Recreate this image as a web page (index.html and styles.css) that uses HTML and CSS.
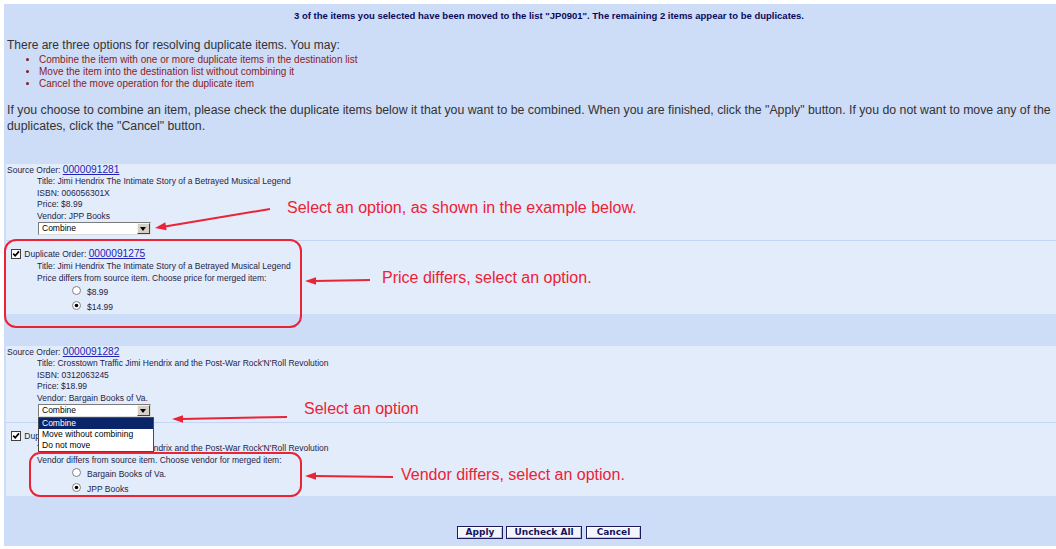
FILE: index.html
```html
<!DOCTYPE html>
<html lang="en">
<head>
    <meta charset="UTF-8">
    <title>Resolve Duplicate Items</title>
    <link rel="stylesheet" href="styles.css">
</head>
<body>

<div class="page">
    <p class="notice">3 of the items you selected have been moved to the list "JP0901". The remaining 2 items appear to be duplicates.</p>

    <div class="intro">
        <p class="lead">There are three options for resolving duplicate items. You may:</p>
        <ul class="choices">
            <li>Combine the item with one or more duplicate items in the destination list</li>
            <li>Move the item into the destination list without combining it</li>
            <li>Cancel the move operation for the duplicate item</li>
        </ul>
        <p class="lead wide">If you choose to combine an item, please check the duplicate items below it that you want to be combined. When you are finished, click the "Apply" button. If you do not want to move any of the duplicates, click the "Cancel" button.</p>
    </div>

    <!-- first duplicate -->
    <div class="group">
        <div class="item source">
            <div class="order">Source Order: <a href="#">0000091281</a></div>
            <div class="details">
                <div>Title: Jimi Hendrix The Intimate Story of a Betrayed Musical Legend</div>
                <div>ISBN: 006056301X</div>
                <div>Price: $8.99</div>
                <div>Vendor: JPP Books</div>
                <div class="select">
                    <span class="select-value">Combine</span>
                    <span class="select-btn"></span>
                </div>
            </div>
        </div>
        <div class="item dup">
            <div class="order">
                <svg class="check" width="10" height="10" viewBox="0 0 10 10"><rect x="0.5" y="0.5" width="9" height="9" fill="#fff" stroke="#404040"/><path d="M2.2 4.6 L4.2 6.8 L8 2.4" fill="none" stroke="#000" stroke-width="1.7"/></svg>
                Duplicate Order: <a href="#">0000091275</a>
            </div>
            <div class="details">
                <div>Title: Jimi Hendrix The Intimate Story of a Betrayed Musical Legend</div>
                <div>Price differs from source item. Choose price for merged item:</div>
                <div class="pick">
                    <svg class="radio" width="9" height="9" viewBox="0 0 9 9"><circle cx="4.5" cy="4.5" r="4" fill="#fff" stroke="#808080"/></svg>
                    <span>$8.99</span>
                </div>
                <div class="pick">
                    <svg class="radio" width="9" height="9" viewBox="0 0 9 9"><circle cx="4.5" cy="4.5" r="4" fill="#fff" stroke="#808080"/><circle cx="4.5" cy="4.5" r="1.8" fill="#000"/></svg>
                    <span>$14.99</span>
                </div>
            </div>
        </div>
    </div>

    <!-- second duplicate -->
    <div class="group second">
        <div class="item source">
            <div class="order">Source Order: <a href="#">0000091282</a></div>
            <div class="details">
                <div>Title: Crosstown Traffic Jimi Hendrix and the Post-War Rock'N'Roll Revolution</div>
                <div>ISBN: 0312063245</div>
                <div>Price: $18.99</div>
                <div>Vendor: Bargain Books of Va.</div>
                <div class="select">
                    <span class="select-value">Combine</span>
                    <span class="select-btn"></span>
                    <div class="select-list">
                        <div class="opt active">Combine</div>
                        <div class="opt">Move without combining</div>
                        <div class="opt">Do not move</div>
                    </div>
                </div>
            </div>
        </div>
        <div class="item dup">
            <div class="order">
                <svg class="check" width="10" height="10" viewBox="0 0 10 10"><rect x="0.5" y="0.5" width="9" height="9" fill="#fff" stroke="#404040"/><path d="M2.2 4.6 L4.2 6.8 L8 2.4" fill="none" stroke="#000" stroke-width="1.7"/></svg>
                Duplicate Order: <a href="#">0000091283</a>
            </div>
            <div class="details">
                <div>Title: Crosstown Traffic Jimi Hendrix and the Post-War Rock'N'Roll Revolution</div>
                <div>Vendor differs from source item. Choose vendor for merged item:</div>
                <div class="pick">
                    <svg class="radio" width="9" height="9" viewBox="0 0 9 9"><circle cx="4.5" cy="4.5" r="4" fill="#fff" stroke="#808080"/></svg>
                    <span>Bargain Books of Va.</span>
                </div>
                <div class="pick">
                    <svg class="radio" width="9" height="9" viewBox="0 0 9 9"><circle cx="4.5" cy="4.5" r="4" fill="#fff" stroke="#808080"/><circle cx="4.5" cy="4.5" r="1.8" fill="#000"/></svg>
                    <span>JPP Books</span>
                </div>
            </div>
        </div>
    </div>

    <div class="actions">
        <button class="btn apply">Apply</button>
        <button class="btn uncheck">Uncheck All</button>
        <button class="btn cancel">Cancel</button>
    </div>
</div>

<!-- callouts drawn over the page -->
<div class="notes">
    <svg class="marks" width="1056" height="549" viewBox="0 0 1056 549">
        <g fill="none" stroke="#ec2235" stroke-width="2">
            <rect x="5" y="240" width="296" height="87" rx="11"/>
            <rect x="30" y="453" width="271" height="43" rx="10"/>
            <line x1="270" y1="209" x2="165" y2="226.4"/>
            <line x1="370" y1="280" x2="314" y2="281"/>
            <line x1="287" y1="417" x2="181" y2="419"/>
            <line x1="393" y1="477" x2="314" y2="476"/>
        </g>
        <g fill="#ec2235">
            <polygon points="155,228 166.6,230.2 165.3,222.3"/>
            <polygon points="305,281 316,277.3 316,284.7"/>
            <polygon points="172,419 183,415.2 183,422.8"/>
            <polygon points="305,476 316,472.3 316,479.7"/>
        </g>
    </svg>
    <span class="note n1">Select an option, as shown in the example below.</span>
    <span class="note n2">Price differs, select an option.</span>
    <span class="note n3">Select an option</span>
    <span class="note n4">Vendor differs, select an option.</span>
</div>

</body>
</html>
```

FILE: styles.css
```css
body {
    margin: 4px 0 3px 4px;
    font-family: "Liberation Sans", Arial, sans-serif;
    background: #fff;
}
.page {
    background: #cddcf7;
    height: 542px;
    overflow: hidden;
}
.notice {
    margin: 0;
    padding: 6px 0 0 38px;
    text-align: center;
    font-size: 9.5px;
    font-weight: bold;
    line-height: 12px;
    color: #0a0a5c;
}
.intro {
    margin-top: 16px;
    padding-left: 3px;
}
.lead {
    margin: 0;
    font-size: 12px;
    line-height: 14px;
    color: #333;
}
.lead.wide {
    margin-top: 12px;
    font-size: 12.3px;
    line-height: 16px;
}
.choices {
    margin: 2px 0 0;
    padding-left: 32px;
    font-size: 10px;
    line-height: 12px;
    color: #8b1c1c;
}
.group {
    margin: 30px 0 0 2px;
}
.group.second {
    margin-top: 32px;
}
.item {
    background: #e3ecfb;
    padding: 0 0 5px 1px;
    color: #1e1e48;
}
.item.source {
    border-bottom: 1px solid #c4d6f3;
}
.item.dup {
    padding: 7px 0 0 1px;
}
.order {
    height: 12px;
    font-size: 8.5px;
    line-height: 12px;
}
.order a {
    font-size: 10.2px;
    line-height: 12px;
    color: #2323b8;
}
.check {
    vertical-align: -2px;
    margin: 0 1px 0 4px;
}
.details {
    padding-left: 30px;
    font-size: 8.5px;
    line-height: 11.5px;
}
.dup .details {
    line-height: 12px;
}
.pick {
    display: flex;
    align-items: center;
    gap: 6px;
    height: 15px;
    padding-left: 35px;
}
.radio {
    margin-top: -3px;
}
.select {
    position: relative;
    z-index: 2;
    display: flex;
    box-sizing: border-box;
    width: 113px;
    height: 13px;
    margin-left: 1px;
    background: #fff;
    border: 1px solid;
    border-color: #7b7b7b #dcdcdc #dcdcdc #7b7b7b;
}
.select-value {
    flex: 1;
    padding-left: 3px;
    font-size: 8.5px;
    line-height: 11px;
    color: #000;
}
.select-btn {
    position: relative;
    width: 11px;
    background: #d4d0c8;
    border: 1px solid;
    border-color: #f4f4f4 #404040 #404040 #f4f4f4;
}
.select-btn::after {
    content: "";
    position: absolute;
    left: 2px;
    top: 3px;
    border-top: 4px solid #000;
    border-left: 3.5px solid transparent;
    border-right: 3.5px solid transparent;
}
.select-list {
    position: absolute;
    top: 12px;
    left: -1px;
    width: 114px;
    background: #fff;
    border: 1px solid #4a4a4a;
    font-size: 8.5px;
    line-height: 11px;
    color: #000;
}
.opt {
    padding-left: 3px;
}
.opt.active {
    background: #0a246a;
    color: #fff;
}
.actions {
    display: flex;
    justify-content: center;
    gap: 3px;
    margin-top: 30px;
    padding-left: 38px;
}
.btn {
    box-sizing: border-box;
    height: 13px;
    padding: 0;
    font-family: "DejaVu Sans", Verdana, sans-serif;
    font-size: 9px;
    font-weight: bold;
    line-height: 11px;
    color: #14145a;
    background: #f3f5fc;
    border: 1px solid #1c1c5c;
    box-shadow: inset 1px 1px #fff, inset -1px -1px #b8c2dc;
}
.btn.apply {
    width: 46px;
}
.btn.uncheck {
    width: 76px;
}
.btn.cancel {
    width: 55px;
    margin-left: 1px;
}
.notes {
    position: absolute;
    top: 0;
    left: 0;
    width: 1056px;
    height: 549px;
    pointer-events: none;
}
.marks {
    position: absolute;
    top: 0;
    left: 0;
}
.note {
    position: absolute;
    font-size: 16px;
    line-height: 18px;
    color: #ec2235;
    white-space: nowrap;
}
.n1 { left: 287px; top: 199px; }
.n2 { left: 382px; top: 269px; }
.n3 { left: 304px; top: 400px; }
.n4 { left: 401px; top: 466px; }
```
